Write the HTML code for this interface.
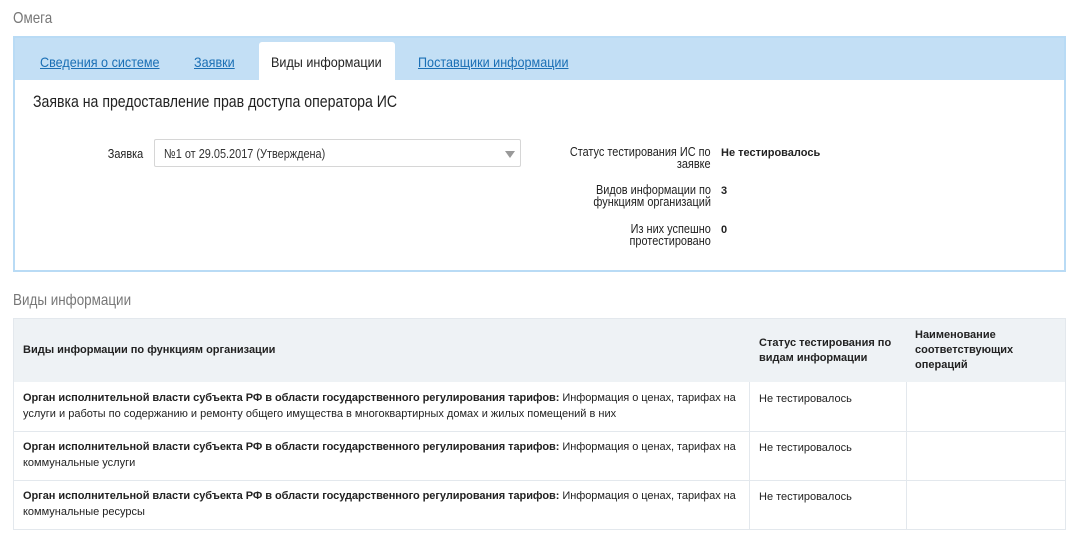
<!DOCTYPE html>
<html><head><meta charset="utf-8"><style>
*{margin:0;padding:0;box-sizing:border-box}
body{width:1085px;height:542px;background:#fff;font-family:"Liberation Sans",Arial,sans-serif;color:#222;position:relative;overflow:hidden}
.a{position:absolute;white-space:nowrap}
.c{transform:scaleX(.84);transform-origin:left top}
.t{transform:scaleX(.9);transform-origin:left top}
.cr{transform:scaleX(.84);transform-origin:right top;text-align:right}
a{color:#1a6fb5;text-decoration:underline}
.b{font-weight:bold}
</style></head><body>
<div class="a c" style="left:13px;top:10px;font-size:16px;color:#777">Омега</div>
<div class="a" style="left:13px;top:36px;width:1053px;height:236px;background:#c3dff5;border:2px solid #b9dbf5"></div>
<div class="a" style="left:15px;top:80px;width:1049px;height:190px;background:#fff"></div>
<div class="a" style="left:259px;top:42px;width:136px;height:38px;background:#fff;border-radius:3px 3px 0 0"></div>
<div class="a t" style="left:40px;top:54px;font-size:14px"><a>Сведения о системе</a></div>
<div class="a t" style="left:194px;top:54px;font-size:14px"><a>Заявки</a></div>
<div class="a t" style="left:271px;top:54px;font-size:14px;color:#222">Виды информации</div>
<div class="a t" style="left:418px;top:54px;font-size:14px"><a>Поставщики информации</a></div>
<div class="a" style="left:33px;top:92px;font-size:17px;transform:scaleX(.83);transform-origin:left top">Заявка на предоставление прав доступа оператора ИС</div>
<div class="a cr" style="right:942px;top:146px;font-size:13px">Заявка</div>
<div class="a" style="left:154px;top:139px;width:367px;height:28px;border:1px solid #d6d6d6;border-radius:2px;background:#fff"></div>
<div class="a c" style="left:164px;top:146px;font-size:13px;color:#333">№1 от 29.05.2017 (Утверждена)</div>
<div class="a" style="left:505px;top:151px;width:0;height:0;border-left:5px solid transparent;border-right:5px solid transparent;border-top:7px solid #999"></div>
<div class="a cr" style="right:374px;top:146px;font-size:13px;line-height:12px">Статус тестирования ИС по<br>заявке</div>
<div class="a b" style="left:721px;top:147px;font-size:11px">Не тестировалось</div>
<div class="a cr" style="right:374px;top:184px;font-size:13px;line-height:12px">Видов информации по<br>функциям организаций</div>
<div class="a b" style="left:721px;top:185px;font-size:11px">3</div>
<div class="a cr" style="right:374px;top:223px;font-size:13px;line-height:12px">Из них успешно<br>протестировано</div>
<div class="a b" style="left:721px;top:224px;font-size:11px">0</div>
<div class="a c" style="left:13px;top:292px;font-size:16px;color:#777">Виды информации</div>
<div class="a" style="left:13px;top:318px;width:1053px;height:212px;border:1px solid #e3e8ed"></div>
<div class="a" style="left:14px;top:319px;width:1051px;height:63px;background:#eef2f5"></div>
<div class="a" style="left:14px;top:431px;width:1051px;height:1px;background:#e3e8ed"></div>
<div class="a" style="left:14px;top:480px;width:1051px;height:1px;background:#e3e8ed"></div>
<div class="a" style="left:749px;top:382px;width:1px;height:147px;background:#e3e8ed"></div>
<div class="a" style="left:906px;top:382px;width:1px;height:147px;background:#e3e8ed"></div>
<div class="a b" style="left:23px;top:344px;font-size:11px">Виды информации по функциям организации</div>
<div class="a b" style="left:759px;top:336px;font-size:11px;line-height:15px">Статус тестирования по<br>видам информации</div>
<div class="a b" style="left:915px;top:328px;font-size:11px;line-height:15px">Наименование<br>соответствующих<br>операций</div>

<div class="a" style="left:23px;top:392px;font-size:11px;letter-spacing:-0.05px"><span class="b">Орган исполнительной власти субъекта РФ в области государственного регулирования тарифов:</span> Информация о ценах, тарифах на</div>
<div class="a" style="left:23px;top:408px;font-size:11px">услуги и работы по содержанию и ремонту общего имущества в многоквартирных домах и жилых помещений в них</div>
<div class="a" style="left:759px;top:393px;font-size:11px">Не тестировалось</div>

<div class="a" style="left:23px;top:441px;font-size:11px;letter-spacing:-0.05px"><span class="b">Орган исполнительной власти субъекта РФ в области государственного регулирования тарифов:</span> Информация о ценах, тарифах на</div>
<div class="a" style="left:23px;top:457px;font-size:11px">коммунальные услуги</div>
<div class="a" style="left:759px;top:442px;font-size:11px">Не тестировалось</div>

<div class="a" style="left:23px;top:490px;font-size:11px;letter-spacing:-0.05px"><span class="b">Орган исполнительной власти субъекта РФ в области государственного регулирования тарифов:</span> Информация о ценах, тарифах на</div>
<div class="a" style="left:23px;top:506px;font-size:11px">коммунальные ресурсы</div>
<div class="a" style="left:759px;top:491px;font-size:11px">Не тестировалось</div>
</body></html>
